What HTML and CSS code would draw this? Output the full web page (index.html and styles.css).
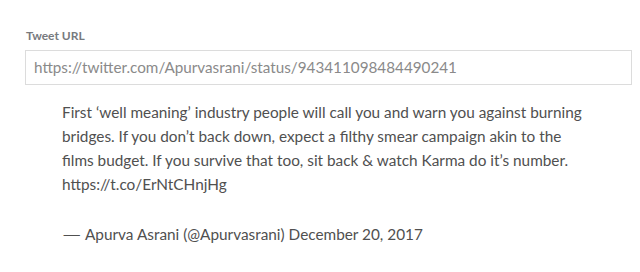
FILE: index.html
```html
<!DOCTYPE html>
<html>
<head>
<meta charset="utf-8">
<link rel="stylesheet" href="styles.css">
</head>
<body>
<div class="field">
  <div class="label">Tweet URL</div>
  <div class="input">https://twitter.com/Apurvasrani/status/943411098484490241</div>
</div>
<blockquote class="tweet">
  <p class="tweet-text">First ‘well meaning’ industry people will call you and warn you against burning bridges. If you don’t back down, expect a filthy smear campaign akin to the films budget. If you survive that too, sit back &amp; watch Karma do it’s number. https://t.co/ErNtCHnjHg</p>
  <p class="tweet-by"><span class="dash">—</span>Apurva Asrani (@Apurvasrani) December 20, 2017</p>
</blockquote>
</body>
</html>
```

FILE: styles.css
```css
html, body {
  margin: 0;
  background: #ffffff;
}
body {
  font-family: Lato, "Open Sans", sans-serif;
  padding: 28px 8px 0 25px;
}
.field {
  display: flex;
  flex-direction: column;
}
.label {
  font-size: 12px;
  line-height: 16px;
  font-weight: 700;
  color: #777a7e;
  padding-left: 1px;
  margin-bottom: 6px;
}
.input {
  box-sizing: border-box;
  height: 35px;
  border: 1px solid #dcdcdc;
  padding: 6px 8px 0 8px;
  font-size: 15.25px;
  line-height: 20px;
  color: #8a8a8a;
}
.tweet {
  margin: 15px 37px 0 37px;
  padding: 0;
  color: #505050;
  font-size: 15.35px;
  line-height: 24px;
}
.tweet-text {
  margin: 0;
}
.tweet-by {
  margin: 26px 0 0 0;
}
.dash {
  display: inline-block;
  width: 23px;
  transform: scaleX(1.6);
  transform-origin: left center;
}
```
